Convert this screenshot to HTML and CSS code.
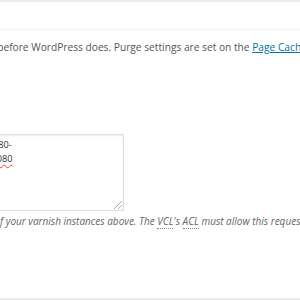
FILE: index.html
```html
<!DOCTYPE html>
<html lang="en">
<head>
    <meta charset="UTF-8">
    <meta name="viewport" content="width=device-width, initial-scale=1.0">
    <title>Varnish Settings</title>
    <link rel="stylesheet" href="styles.css">
</head>
<body>
    <div class="postbox">
        <div class="postbox-head"></div>
        <div class="inside">
            <p class="intro">Cache objects in <a href="#">Varnish</a> before WordPress does. Purge settings are set on the <a href="#">Page Cache settings</a> page.</p>

            <div class="field">
                <div class="textarea">
                    <div class="line">127.0.0.1:80-</div>
                    <div class="line"><span class="misspelled">server2:8080</span></div>
                    <span class="grip"></span>
                </div>
                <p class="description">Specify the IP addresses of your varnish instances above. The <abbr title="Varnish Configuration Language">VCL</abbr>'s <abbr title="Access Control List">ACL</abbr> must allow this request.</p>
            </div>
        </div>
        <div class="postbox-foot"></div>
    </div>
</body>
</html>
```

FILE: styles.css
```css
/* Reset and basic layout */
* {
    margin: 0;
    padding: 0;
    box-sizing: border-box;
}

body {
    font-family: "Open Sans", Arial, sans-serif;
    font-size: 10.2px;
    color: #555;
    background: #fff;
    width: 300px;
    height: 300px;
    overflow: hidden;
}

a {
    color: #0073aa;
}

.postbox {
    display: flex;
    flex-direction: column;
    height: 300px;
}

.postbox-head {
    height: 2px;
    background-color: #ebebeb;
    margin-bottom: 27px;
    flex-shrink: 0;
}

.inside {
    flex: 1;
    border-top: 1px solid #f0f0f0;
}

.intro {
    margin: 9px 0 0 -121px;
    line-height: 16px;
    white-space: nowrap;
}

.field {
    margin-top: 79px;
}

.textarea {
    position: relative;
    width: 300px;
    height: 77px;
    margin-left: -176px;
    padding: 3px 8px;
    border: 1px solid #dddddd;
    box-shadow: inset 0 1px 2px rgba(0, 0, 0, 0.07);
    font-size: 9.2px;
    line-height: 14px;
    color: #333;
}

.line {
    padding-left: 124px;
    white-space: nowrap;
}

.misspelled {
    text-decoration: underline wavy #e53935;
    text-decoration-thickness: 1px;
    text-underline-offset: 2px;
}

/* resize grip in the bottom right corner */
.grip {
    position: absolute;
    right: 1px;
    bottom: 1px;
    width: 8px;
    height: 8px;
    background: linear-gradient(135deg,
        transparent 45%, #aaa 45%, #aaa 52%, transparent 52%,
        transparent 70%, #aaa 70%, #aaa 77%, transparent 77%);
}

.description {
    margin: 2px 0 0 -113px;
    font-size: 10px;
    font-style: italic;
    color: #666;
    line-height: 16px;
    white-space: nowrap;
}

abbr {
    text-decoration: none;
    border-bottom: 1px dotted #888;
}

.postbox-foot {
    height: 2px;
    background-color: #ebebeb;
    flex-shrink: 0;
}
```
